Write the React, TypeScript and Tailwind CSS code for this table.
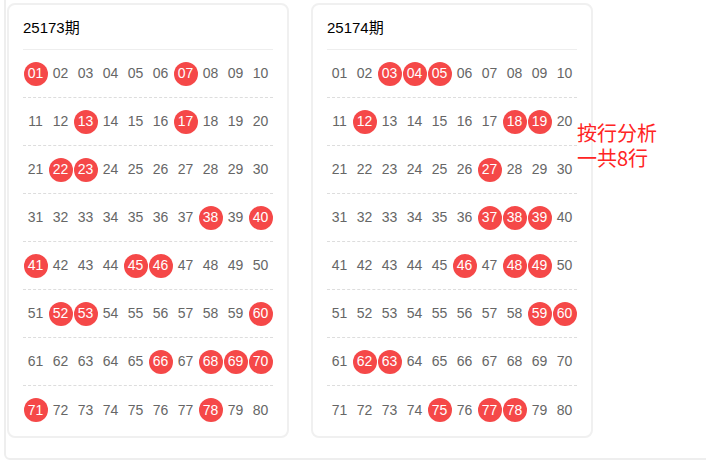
import React from "react";

const draws = [
  { issue: "25173期", picks: [1, 7, 13, 17, 22, 23, 38, 40, 41, 45, 46, 52, 53, 60, 66, 68, 69, 70, 71, 78] },
  { issue: "25174期", picks: [3, 4, 5, 12, 18, 19, 27, 37, 38, 39, 46, 48, 49, 59, 60, 62, 63, 75, 77, 78] },
];

const pad = (n: number) => (n < 10 ? "0" + n : String(n));

const DrawCard = ({ issue, picks }: { issue: string; picks: number[] }) => {
  const rows = Array.from({ length: 8 }, (_, r) => Array.from({ length: 10 }, (_, c) => r * 10 + c + 1));
  return (
    <div className="w-[282px] border-2 border-[#f0f0f0] rounded-lg px-[14px] pt-[14px] pb-[2px] bg-white">
      <div className="h-[31px] pt-px leading-[15px] text-[15px] text-black border-b border-[#eeeeee]">{issue}</div>
      {rows.map((row, i) => (
        <div
          key={i}
          className={`grid grid-cols-10 h-[48px] items-center ${i < 7 ? "border-b border-dashed border-[#dddddd]" : ""}`}
        >
          {row.map((n) => {
            const hit = picks.includes(n);
            return (
              <div key={n} className="flex justify-center">
                <span
                  className={`w-6 h-6 rounded-full flex items-center justify-center text-[14px] ${
                    hit ? "bg-[#f54848] text-white" : "text-[#666666]"
                  }`}
                >
                  {pad(n)}
                </span>
              </div>
            );
          })}
        </div>
      ))}
    </div>
  );
};

export default function App() {
  return (
    <div
      className="relative w-[706px] h-[460px] overflow-hidden bg-white"
      style={{ fontFamily: '"Liberation Sans", Arial, "Noto Sans CJK SC", sans-serif' }}
    >
      <div className="ml-1 -mt-2 w-[740px] border-2 border-[#eeeeee] rounded-md pl-px pt-[9px] pb-[20px]">
        <div className="flex gap-[22px]">
          {draws.map((d) => (
            <DrawCard key={d.issue} issue={d.issue} picks={d.picks} />
          ))}
        </div>
      </div>
      <div
        className="absolute left-[577px] top-[120px] text-[20px] leading-[25px] text-[#ff2424]"
        style={{ fontFamily: '"Noto Sans CJK SC", sans-serif' }}
      >
        <div>按行分析</div>
        <div>一共8行</div>
      </div>
    </div>
  );
}
